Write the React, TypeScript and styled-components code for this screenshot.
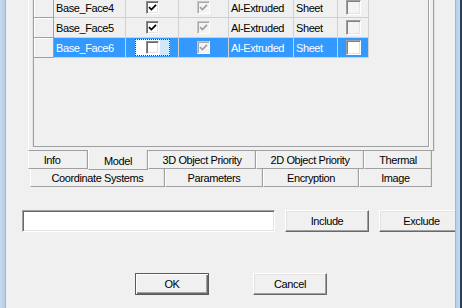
import React from "react";
import styled, { createGlobalStyle, css } from "styled-components";

const GlobalStyle = createGlobalStyle`
  html, body { margin: 0; padding: 0; }
  body {
    font-family: "Liberation Sans", Arial, sans-serif;
    font-size: 11px;
    letter-spacing: -0.4px;
    color: #000;
    background: #f0f0f0;
  }
`;

const Window = styled.div`
  width: 462px;
  height: 308px;
  display: flex;
  overflow: hidden;
  background: #f0f0f0;
`;

const FrameLeft = styled.div`
  flex: none;
  width: 6px;
  box-sizing: border-box;
  background: linear-gradient(90deg, #c4daf0, #b5cde6);
  border-right: 1px solid #9cb8d6;
`;

const FrameRight = styled.div`
  flex: none;
  width: 7px;
  box-sizing: border-box;
  background: linear-gradient(90deg, #b5cde6, #c4daf0);
  border-left: 1px solid #9cb8d6;
  border-right: 2px solid #2e3d50;
`;

const Content = styled.div`
  flex: 1;
  min-width: 0;
  overflow: hidden;
  display: flex;
  flex-direction: column;
`;

const TabControl = styled.div`
  margin-left: 22px;
  width: 406px;
  display: flex;
  flex-direction: column;
`;

const TabPage = styled.div`
  height: 151px;
  box-sizing: border-box;
  border-left: 1px solid #fff;
  border-right: 1px solid #a0a0a0;
  border-bottom: 1px solid #a0a0a0;
  box-shadow: 1px 0 0 #e0e0e0;
  padding: 0 4px 3px 4px;
  display: flex;
`;

const Grid = styled.div`
  flex: 1;
  border: 1px solid #a0a0a0;
  border-top: none;
  box-shadow: -1px 0 0 #e3e3e3, 1px 0 0 #fff;
  overflow: hidden;
  background: #f0f0f0;
`;

const Rows = styled.div`
  margin-top: -2px;
  display: flex;
  flex-direction: column;
`;

const Row = styled.div`
  display: flex;
  height: 20px;
`;

const RowHeader = styled.div`
  flex: none;
  width: 20px;
  box-sizing: border-box;
  border-right: 1px solid #a0a0a0;
  border-bottom: 1px solid #a0a0a0;
  background: #f0f0f0;
  box-shadow: inset 1px 1px 0 #fff;
`;

const Cell = styled.div<{ $w: number; $sel?: boolean; $center?: boolean }>`
  flex: none;
  width: ${(p) => p.$w}px;
  box-sizing: border-box;
  border-right: 1px solid #d0d0d0;
  border-bottom: 1px solid #d0d0d0;
  background: ${(p) => (p.$sel ? "#3399ff" : "#f0f0f0")};
  color: ${(p) => (p.$sel ? "#fff" : "#000")};
  display: flex;
  align-items: center;
  justify-content: ${(p) => (p.$center ? "center" : "flex-start")};
  padding-left: ${(p) => (p.$center ? 0 : 2)}px;
  white-space: nowrap;
  overflow: hidden;
`;

const CheckBox = styled.span<{ $kind: "on" | "dis" | "off"; $white?: boolean }>`
  display: inline-flex;
  align-items: center;
  justify-content: center;
  box-sizing: border-box;
  width: 13px;
  height: 13px;
  border: 1px solid;
  ${(p) =>
    p.$kind === "on" &&
    css`
      background: #fff;
      border-color: #8a8a8a #fff #fff #8a8a8a;
      box-shadow: inset 1px 1px 0 #696969, inset -1px -1px 0 #e3e3e3;
    `}
  ${(p) =>
    p.$kind === "dis" &&
    css`
      background: #f4f4f4;
      border-color: #c8c8c8 #fff #fff #c8c8c8;
      box-shadow: inset 1px 1px 0 #a8a8a8;
    `}
  ${(p) =>
    p.$kind === "off" &&
    css`
      width: 15px;
      height: 15px;
      background: ${p.$white ? "#fff" : "#f4f4f4"};
      border-color: #a0a0a0 #fff #fff #a0a0a0;
      box-shadow: inset 1px 1px 0 #808080, inset -1px -1px 0 #e3e3e3;
    `}
`;

const FocusBox = styled.span`
  box-sizing: border-box;
  width: 35px;
  height: 17px;
  border: 1px dotted #6e2e2e;
  background: linear-gradient(90deg, #fff 0 72%, #d4e6fa 72%);
  display: flex;
  align-items: center;
  justify-content: center;
`;

const TabRow = styled.div<{ $indent?: number }>`
  display: flex;
  height: 18px;
  padding-left: ${(p) => p.$indent ?? 0}px;
`;

const Tab = styled.div<{ $w: number; $active?: boolean; $shift?: number }>`
  flex: none;
  align-self: flex-start;
  width: ${(p) => p.$w}px;
  height: 18px;
  box-sizing: border-box;
  display: flex;
  align-items: center;
  justify-content: center;
  padding-right: ${(p) => p.$shift ?? 0}px;
  border-left: 1px solid #fff;
  border-right: 1px solid #a0a0a0;
  border-bottom: 1px solid #a0a0a0;
  box-shadow: inset -1px 0 0 #e3e3e3;
  background: #f0f0f0;
  white-space: nowrap;
  ${(p) =>
    p.$active &&
    css`
      margin-top: -1px;
      height: 20px;
      padding-top: 3px;
      position: relative;
      z-index: 1;
    `}
`;

const FilterRow = styled.div`
  display: flex;
  gap: 10px;
  margin-top: 23px;
  padding-left: 16px;
`;

const TextBox = styled.input`
  flex: none;
  width: 253px;
  height: 22px;
  box-sizing: border-box;
  margin: 0;
  padding: 0 3px;
  border: 1px solid;
  border-color: #a0a0a0 #fff #fff #a0a0a0;
  box-shadow: inset 1px 1px 0 #696969, inset -1px -1px 0 #e3e3e3;
  background: #fff;
  outline: none;
  font: inherit;
`;

const Button = styled.button<{ $w: number; $default?: boolean }>`
  flex: none;
  width: ${(p) => p.$w}px;
  height: 22px;
  box-sizing: border-box;
  margin: 0;
  padding: 0;
  font: inherit;
  letter-spacing: inherit;
  color: #000;
  background: #f0f0f0;
  border: 1px solid;
  border-color: #fff #696969 #696969 #fff;
  box-shadow: inset -1px -1px 0 #a0a0a0, inset 1px 1px 0 #e3e3e3;
  ${(p) =>
    p.$default &&
    css`
      border-color: #5a5a5a;
      box-shadow: inset 1px 1px 0 #fff, inset -1px -1px 0 #696969,
        inset -2px -2px 0 #a0a0a0;
    `}
`;

const ButtonRow = styled.div`
  display: flex;
  gap: 44px;
  margin-top: 41px;
  padding-left: 129px;
`;

const Check = ({ color }: { color: string }) => (
  <svg width="9" height="9" viewBox="0 0 9 9">
    <path d="M1 4.2 L3.4 6.6 L8 1.8" fill="none" stroke={color} strokeWidth="1.7" />
  </svg>
);

const COLS = { name: 72, c1: 53, c2: 50, mat: 65, type: 44, last: 31 };

const rows = [
  { name: "Base_Face4", sel: false },
  { name: "Base_Face5", sel: false },
  { name: "Base_Face6", sel: true },
];

const row1 = [
  { label: "Info", w: 60, shift: 12 },
  { label: "Model", w: 60, active: true },
  { label: "3D Object Priority", w: 108 },
  { label: "2D Object Priority", w: 108 },
  { label: "Thermal", w: 68 },
];

const row2 = [
  { label: "Coordinate Systems", w: 135 },
  { label: "Parameters", w: 98 },
  { label: "Encryption", w: 96 },
  { label: "Image", w: 73 },
];

export default function App() {
  return (
    <>
      <GlobalStyle />
      <Window>
        <FrameLeft />
        <Content>
          <TabControl>
            <TabPage>
              <Grid>
                <Rows>
                  {rows.map((r) => (
                    <Row key={r.name}>
                      <RowHeader />
                      <Cell $w={COLS.name} $sel={r.sel}>{r.name}</Cell>
                      <Cell $w={COLS.c1} $sel={r.sel} $center>
                        {r.sel ? (
                          <FocusBox>
                            <CheckBox $kind="on" />
                          </FocusBox>
                        ) : (
                          <CheckBox $kind="on">
                            <Check color="#000" />
                          </CheckBox>
                        )}
                      </Cell>
                      <Cell $w={COLS.c2} $sel={r.sel} $center>
                        <CheckBox $kind="dis">
                          <Check color="#a0a0a0" />
                        </CheckBox>
                      </Cell>
                      <Cell $w={COLS.mat} $sel={r.sel}>Al-Extruded</Cell>
                      <Cell $w={COLS.type} $sel={r.sel}>Sheet</Cell>
                      <Cell $w={COLS.last} $sel={r.sel} $center>
                        <CheckBox $kind="off" $white={r.sel} />
                      </Cell>
                    </Row>
                  ))}
                </Rows>
              </Grid>
            </TabPage>
            <TabRow>
              {row1.map((t) => (
                <Tab key={t.label} $w={t.w} $active={t.active} $shift={t.shift}>
                  {t.label}
                </Tab>
              ))}
            </TabRow>
            <TabRow $indent={2}>
              {row2.map((t) => (
                <Tab key={t.label} $w={t.w}>
                  {t.label}
                </Tab>
              ))}
            </TabRow>
          </TabControl>
          <FilterRow>
            <TextBox type="text" />
            <Button $w={84}>Include</Button>
            <Button $w={85}>Exclude</Button>
          </FilterRow>
          <ButtonRow>
            <Button $w={74} $default>OK</Button>
            <Button $w={74}>Cancel</Button>
          </ButtonRow>
        </Content>
        <FrameRight />
      </Window>
    </>
  );
}
